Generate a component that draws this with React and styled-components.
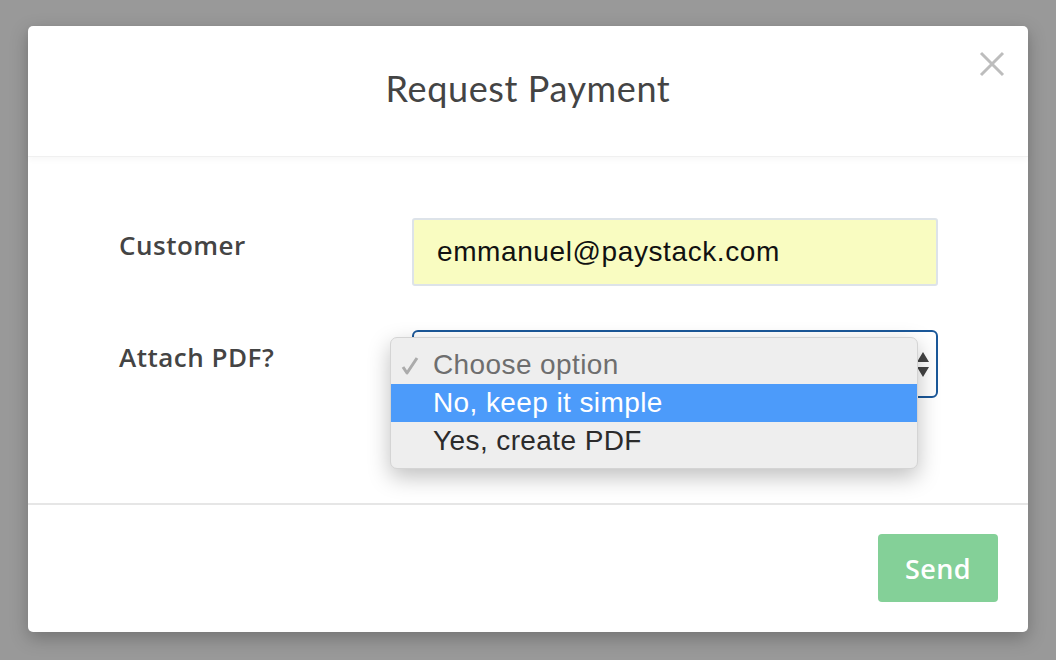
import React from "react";
import styled, { createGlobalStyle } from "styled-components";

const Global = createGlobalStyle`
    html, body {
        margin: 0;
        padding: 0;
        background: #999999;
    }
    body {
        padding: 26px 28px;
        font-family: "Open Sans", "Liberation Sans", sans-serif;
    }
`;

const Modal = styled.div`
    width: 1000px;
    height: 606px;
    background: #fff;
    border-radius: 5px;
    box-shadow: 0 6px 18px rgba(0, 0, 0, 0.25);
    display: flex;
    flex-direction: column;
`;

const Header = styled.div`
    position: relative;
    height: 130px;
    display: flex;
    align-items: center;
    justify-content: center;
    border-bottom: 1px solid #f0f0f0;
    box-shadow: 0 3px 6px rgba(0, 0, 0, 0.03);
`;

const Title = styled.h2`
    margin: 0;
    margin-top: -6px;
    font-family: "Lato", sans-serif;
    font-weight: 400;
    font-size: 36px;
    color: #444;
    letter-spacing: 0.6px;
`;

const CloseButton = styled.button`
    position: absolute;
    top: 24px;
    right: 22px;
    width: 28px;
    height: 28px;
    padding: 0;
    border: none;
    background: none;
    cursor: pointer;
    svg {
        display: block;
    }
`;

const Body = styled.div`
    flex: 1;
    padding: 61px 90px 0 91px;
    display: flex;
    flex-direction: column;
    gap: 44px;
`;

const Row = styled.div`
    display: flex;
    align-items: flex-start;
`;

const Label = styled.label`
    width: 293px;
    padding-top: 9px;
    font-family: "Open Sans", sans-serif;
    font-weight: 600;
    font-size: 26px;
    letter-spacing: 0.5px;
    color: #444;
`;

const Field = styled.div`
    position: relative;
    width: 526px;
    height: 68px;
    box-sizing: border-box;
    border: 2px solid ${p => p.$focused ? "#1b5899" : "#dde3e9"};
    border-radius: ${p => p.$focused ? "6px" : "3px"};
    background: ${p => p.$autofill ? "#f9fcc1" : "#fff"};
    display: flex;
    align-items: center;
    padding: 0 23px;
    font-family: "Liberation Sans", Arial, sans-serif;
    font-size: 28px;
    letter-spacing: 0.6px;
    color: #111;
`;

const Arrows = styled.svg`
    position: absolute;
    right: 6px;
    top: 18px;
`;

const Menu = styled.ul`
    position: absolute;
    left: -24px;
    top: 5px;
    width: 528px;
    margin: 0;
    padding: 8px 0;
    list-style: none;
    background: #eeeeee;
    border-radius: 7px;
    border: 1px solid #d4d4d4;
    box-shadow: 0 8px 22px rgba(0, 0, 0, 0.25);
    box-sizing: border-box;
`;

const Option = styled.li`
    position: relative;
    height: 38px;
    display: flex;
    align-items: center;
    padding-left: 42px;
    font-family: "Liberation Sans", Arial, sans-serif;
    font-size: 28px;
    letter-spacing: 0.4px;
    color: ${p => p.$active ? "#fff" : p.$muted ? "#6e6e6e" : "#2b2b2b"};
    background: ${p => p.$active ? "#4c9bfa" : "transparent"};
`;

const Check = styled.svg`
    position: absolute;
    left: 10px;
    top: 10px;
`;

const Footer = styled.div`
    height: 129px;
    box-sizing: border-box;
    border-top: 2px solid #e6e6e6;
    display: flex;
    justify-content: flex-end;
    align-items: flex-start;
    padding: 29px 30px 0 0;
`;

const SendButton = styled.button`
    width: 120px;
    height: 68px;
    border: none;
    border-radius: 4px;
    background: #84d098;
    color: #fff;
    font-family: "Open Sans", sans-serif;
    font-weight: 600;
    font-size: 27px;
    letter-spacing: 0.4px;
    cursor: pointer;
`;

export default function App() {
    return (
        <>
            <Global />
            <Modal>
                <Header>
                    <Title>Request Payment</Title>
                    <CloseButton aria-label="Close">
                        <svg width="28" height="28" viewBox="0 0 28 28">
                            <path d="M3 3 L25 25 M25 3 L3 25" stroke="#bdbdbd" strokeWidth="3" />
                        </svg>
                    </CloseButton>
                </Header>
                <Body>
                    <Row>
                        <Label>Customer</Label>
                        <Field $autofill>emmanuel@paystack.com</Field>
                    </Row>
                    <Row>
                        <Label>Attach PDF?</Label>
                        <Field $focused>
                            <Arrows width="14" height="30" viewBox="0 0 14 30">
                                <path d="M7 2 L13 12 L1 12 Z M1 17 L13 17 L7 27 Z" fill="#444" />
                            </Arrows>
                            <Menu>
                                <Option $muted>
                                    <Check width="18" height="20" viewBox="0 0 18 20">
                                        <path d="M2 11 L6 17 L16 2" fill="none" stroke="#ababab" strokeWidth="3" strokeLinejoin="round" />
                                    </Check>
                                    Choose option
                                </Option>
                                <Option $active>No, keep it simple</Option>
                                <Option>Yes, create PDF</Option>
                            </Menu>
                        </Field>
                    </Row>
                </Body>
                <Footer>
                    <SendButton>Send</SendButton>
                </Footer>
            </Modal>
        </>
    );
}
